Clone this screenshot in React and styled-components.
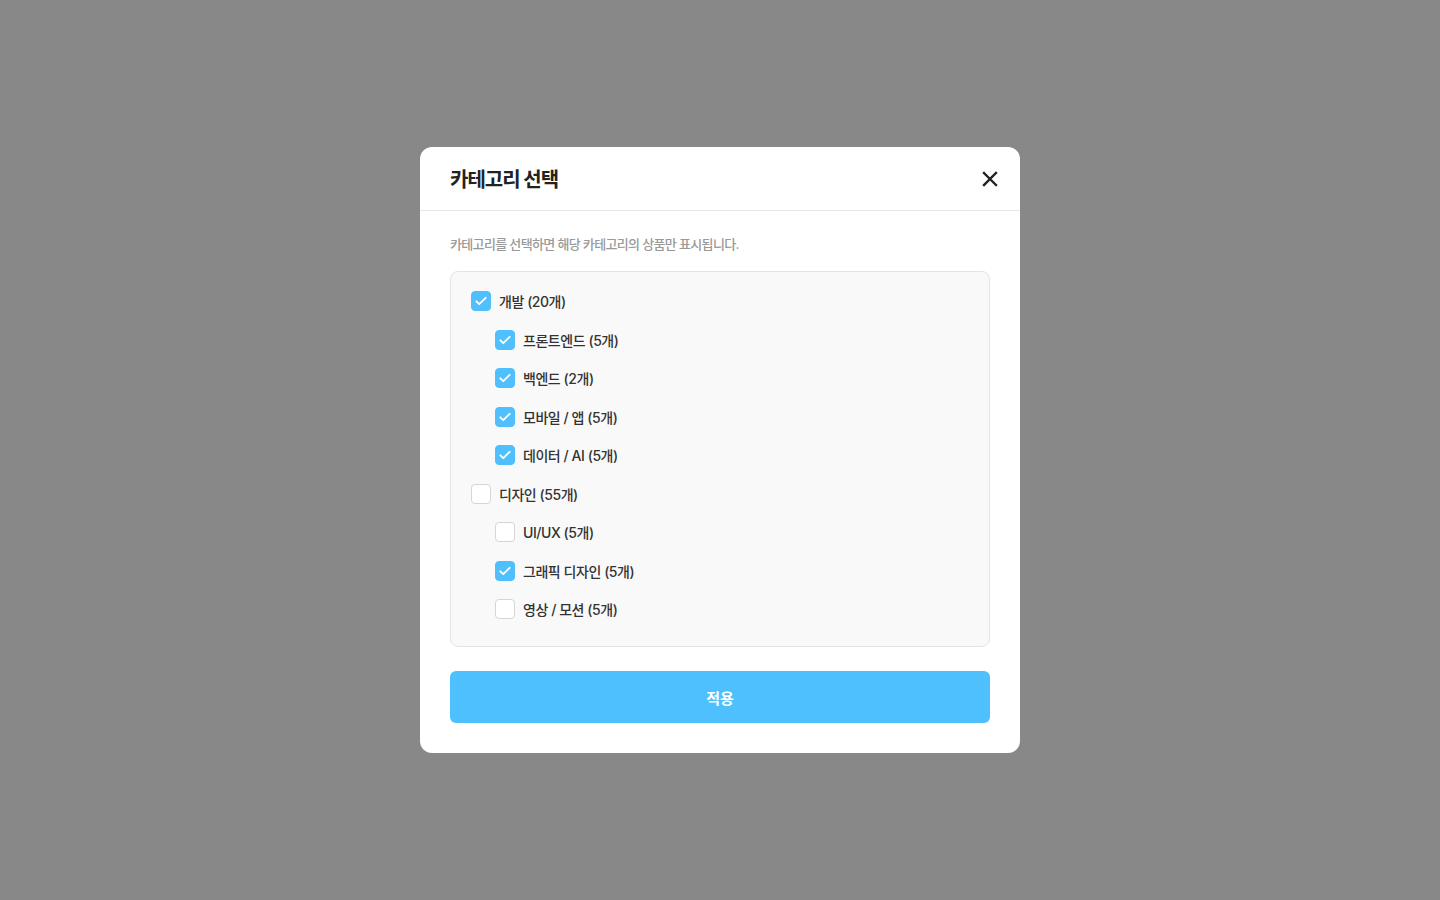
import React, { useState } from 'react';
import styled, { createGlobalStyle } from 'styled-components';

const GlobalStyle = createGlobalStyle`
  * { box-sizing: border-box; }
  html, body {
    margin: 0;
    padding: 0;
    height: 100%;
  }
  body {
    font-family: "Inter", "Noto Sans CJK KR", sans-serif;
    background: #888889;
  }
`;

const initialGroups = [
  {
    id: 'dev',
    label: '개발 (20개)',
    checked: true,
    children: [
      { id: 'fe', label: '프론트엔드 (5개)', checked: true },
      { id: 'be', label: '백엔드 (2개)', checked: true },
      { id: 'mobile', label: '모바일 / 앱 (5개)', checked: true },
      { id: 'data', label: '데이터 / AI (5개)', checked: true }
    ]
  },
  {
    id: 'design',
    label: '디자인 (55개)',
    checked: false,
    children: [
      { id: 'uiux', label: 'UI/UX (5개)', checked: false },
      { id: 'graphic', label: '그래픽 디자인 (5개)', checked: true },
      { id: 'motion', label: '영상 / 모션 (5개)', checked: false }
    ]
  }
];

const CheckIcon = () => (
  <svg width="14" height="14" viewBox="0 0 24 24" fill="none" stroke="#fff" strokeWidth="3.2" strokeLinecap="round" strokeLinejoin="round">
    <path d="M4 12.5l5 5L20 6.5" />
  </svg>
);

const CloseIcon = () => (
  <svg width="16" height="16" viewBox="0 0 16 16" fill="none" stroke="#222" strokeWidth="2.4" strokeLinecap="square">
    <path d="M2 2l12 12M14 2L2 14" />
  </svg>
);

const CategoryModal = () => {
  const [groups, setGroups] = useState(initialGroups);

  const toggleGroup = (gid) => {
    setGroups(gs => gs.map(g => g.id === gid ? { ...g, checked: !g.checked } : g));
  };

  const toggleChild = (gid, cid) => {
    setGroups(gs => gs.map(g => g.id !== gid ? g : {
      ...g,
      children: g.children.map(c => c.id === cid ? { ...c, checked: !c.checked } : c)
    }));
  };

  return (
    <Overlay>
      <Modal>
        <Header>
          <Title>카테고리 선택</Title>
          <CloseButton aria-label="닫기"><CloseIcon /></CloseButton>
        </Header>

        <Body>
          <Description>카테고리를 선택하면 해당 카테고리의 상품만 표시됩니다.</Description>

          <CategoryBox>
            {groups.map(group => (
              <React.Fragment key={group.id}>
                <Row onClick={() => toggleGroup(group.id)}>
                  <Box $checked={group.checked}>{group.checked && <CheckIcon />}</Box>
                  <Label>{group.label}</Label>
                </Row>
                {group.children.map(child => (
                  <Row key={child.id} $sub onClick={() => toggleChild(group.id, child.id)}>
                    <Box $checked={child.checked}>{child.checked && <CheckIcon />}</Box>
                    <Label>{child.label}</Label>
                  </Row>
                ))}
              </React.Fragment>
            ))}
          </CategoryBox>

          <ApplyButton>적용</ApplyButton>
        </Body>
      </Modal>
    </Overlay>
  );
};

const Overlay = styled.div`
  width: 100vw;
  height: 100vh;
  display: flex;
  align-items: center;
  justify-content: center;
  background: #888889;
`;

const Modal = styled.div`
  width: 600px;
  background: #fff;
  border-radius: 12px;
  overflow: hidden;
`;

const Header = styled.div`
  height: 64px;
  padding: 0 10px 0 30px;
  display: flex;
  align-items: center;
  justify-content: space-between;
  border-bottom: 1px solid #e6e6e6;
`;

const Title = styled.h2`
  margin: 0;
  font-size: 20px;
  font-weight: 700;
  color: #222;
  letter-spacing: -1px;
`;

const CloseButton = styled.button`
  width: 40px;
  height: 40px;
  border: none;
  background: none;
  padding: 0;
  display: flex;
  align-items: center;
  justify-content: center;
  cursor: pointer;
`;

const Body = styled.div`
  padding: 24px 30px 30px;
`;

const Description = styled.p`
  margin: 0 0 18px;
  font-size: 13px;
  line-height: 18px;
  font-weight: 500;
  color: #999;
  letter-spacing: -0.65px;
`;

const CategoryBox = styled.div`
  background: #f9f9f9;
  border: 1px solid #e4e4e4;
  border-radius: 8px;
  padding: 19px 20px 27px;
  display: flex;
  flex-direction: column;
  gap: 18.5px;
  margin-bottom: 24px;
`;

const Row = styled.label`
  display: flex;
  align-items: center;
  gap: 8px;
  height: 20px;
  padding-left: ${props => (props.$sub ? '24px' : '0')};
  cursor: pointer;
`;

const Box = styled.span`
  width: 20px;
  height: 20px;
  border-radius: 4px;
  flex-shrink: 0;
  display: flex;
  align-items: center;
  justify-content: center;
  background: ${props => (props.$checked ? '#4fbffd' : '#fff')};
  border: 1px solid ${props => (props.$checked ? '#4fbffd' : '#d5d5d5')};
`;

const Label = styled.span`
  font-size: 14px;
  font-weight: 500;
  color: #333;
  letter-spacing: -0.45px;
`;

const ApplyButton = styled.button`
  width: 100%;
  height: 52px;
  border: none;
  border-radius: 6px;
  background: #4fc0fe;
  color: #fff;
  font-family: inherit;
  font-size: 15px;
  font-weight: 700;
  cursor: pointer;
`;

const App = () => (
  <>
    <GlobalStyle />
    <CategoryModal />
  </>
);

export default App;
